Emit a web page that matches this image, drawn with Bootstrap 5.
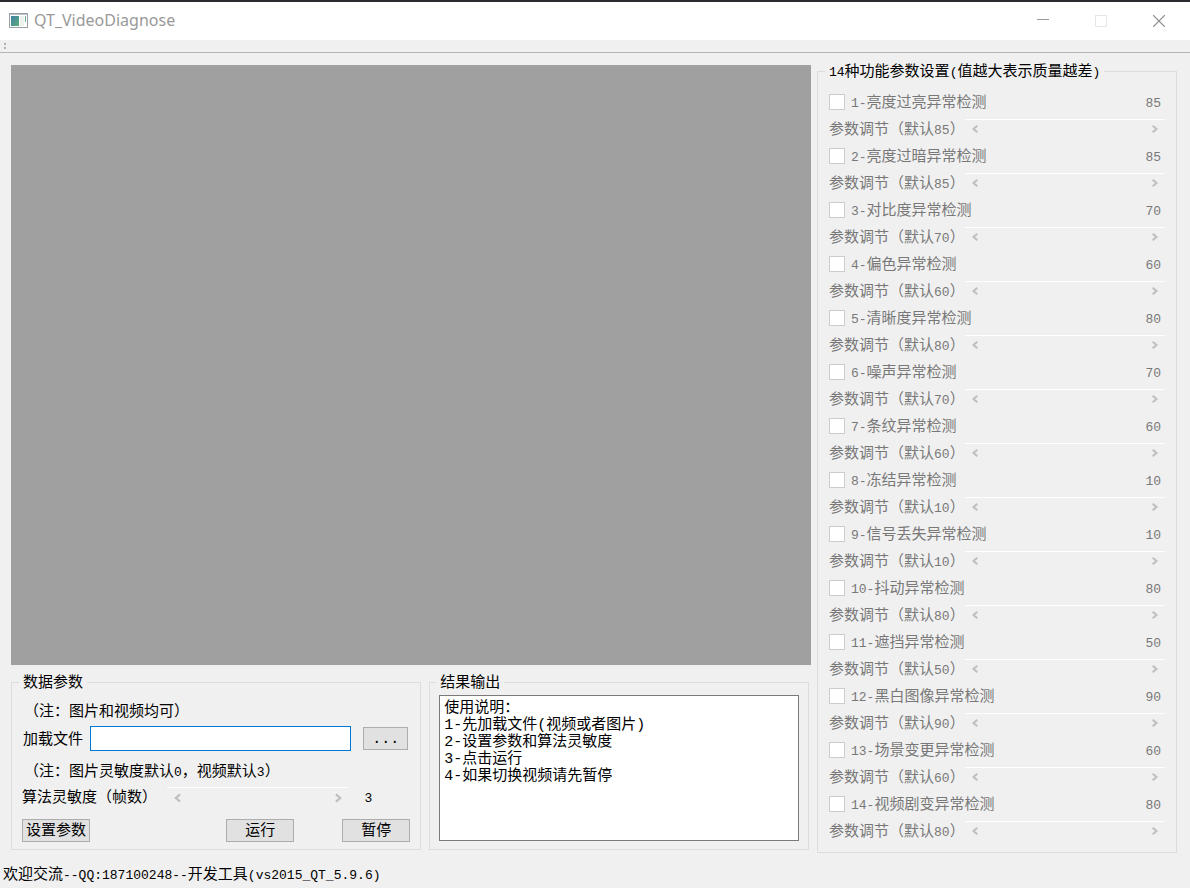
<!DOCTYPE html>
<html lang="zh-CN">
<head>
<meta charset="utf-8">
<meta name="viewport" content="width=device-width, initial-scale=1">
<title>QT_VideoDiagnose</title>
<link href="https://cdn.jsdelivr.net/npm/bootstrap@5.3.0/dist/css/bootstrap.min.css" rel="stylesheet">
<style>
  body { background: #f0f0f0; color: #000; font: 15px/20px "Liberation Mono", "Noto Sans CJK SC", monospace; }
  .lat { font-size: 13px; }
  .titlebar { background: #fff; border-top: 2px solid #2c2c30; height: 40px; padding: 0 2px 0 9px; }
  .app-title { font: 16px/20px "Noto Sans", sans-serif; color: #999; margin: 0 0 2px 6px; }
  .win-btn { width: 58px; height: 36px; border: 0; background: none; padding: 0; display: flex; align-items: center; justify-content: center; }
  .toolstrip { height: 13px; border-bottom: 1px solid #b4b4b4; padding-left: 3px; }
  .workspace { padding: 12px 13px 0 11px; gap: 6px; }
  .video-view { aspect-ratio: 4 / 3; background: #a0a0a0; }
  .side { flex: 0 0 360px; margin-top: -2px; }
  .group-box { border: 1px solid #dcdcdc; min-width: 0; }
  .group-box > legend { float: none; width: auto; height: 16px; font-size: 15px; line-height: 20px; margin: 0 0 0 -4px; padding: 0 4px; white-space: nowrap; }
  .lower { margin-top: 9px; gap: 8px; padding-right: 2px; }
  .g-data { flex: 41 1 0; padding: 0 10px 7px; }
  .g-result { flex: 38 1 0; padding: 0 9px 8px; }
  .g-data > legend, .g-result > legend { margin-left: -3px; }
  /* Song-style baseline: glyphs sit low in a 20px line */
  .row-text { height: 20px; line-height: 24px; white-space: nowrap; }
  .note-a { margin-top: 11px; padding-left: 2px; }
  .note-b { margin-top: 10px; padding-left: 2px; }
  .file-row { margin-top: 5px; padding: 0 2px 0 1px; }
  .file-row label { margin-right: 7px; }
  .sens-row { margin-top: 6px; }
  .sens-row .scroller { margin: 0 16px 0 10px; }
  .sens-row output { margin-right: 38px; }
  .path-input { height: 25px; border: 1px solid #0078d7; border-radius: 0; padding: 0 4px; font-size: 15px; background: #fff; }
  .path-input:focus { border-color: #0078d7; box-shadow: none; }
  .push { height: 23px; width: 68px; border: 1px solid #adadad; border-radius: 0; background: #e1e1e1; color: #000; font-size: 15px; line-height: 18px; padding: 2px 0 0; }
  .push:hover { border-color: #0078d7; background: #e5f1fb; color: #000; }
  .browse { width: 45px; margin-left: 12px; }
  .out-text { height: 146px; margin-top: 5px; border: 1px solid #7a7a7a; border-radius: 0; background: #fff; color: #000; font-size: 15px; line-height: 17px; padding: 4px 4px; resize: none; }
  .scroller { height: 20px; border-top: 1px solid #fff; }
  .scroller button { border: 0; background: none; padding: 0; width: 20px; height: 19px; display: flex; align-items: center; justify-content: center; flex: none; }
  .scroller input { appearance: none; -webkit-appearance: none; background: none; flex: 1 1 0; min-width: 0; height: 18px; margin: 0; }
  .scroller input::-webkit-slider-thumb { -webkit-appearance: none; width: 1px; height: 1px; background: none; border: 0; }
  .side .group-box { padding: 9px 11px 8px; color: #787878; }
  .side legend { color: #000; }
  .item-row { height: 27px; }
  .item-row label, .item-row output { height: 20px; line-height: 24px; white-space: nowrap; }
  .item-row .form-check-input { width: 16px; height: 16px; margin: 0 6px 0 0; border: 1px solid #ccc; border-radius: 0; background: #fff; opacity: 1; flex: none; }
  .item-row .form-check-input:disabled ~ label { opacity: 1; }
  .item-row output { padding-right: 4px; }
  .item-row .scroller { flex: 0 0 200px; }
  .status { padding: 13px 3px 2px; }
</style>
</head>
<body>
<svg width="0" height="0" class="d-none" aria-hidden="true">
  <symbol id="lt" viewBox="0 0 8 8"><path d="M6.300 .7 2.500 4l3.800 3.300" fill="none" stroke="#bfbfbf" stroke-width="2"/></symbol>
  <symbol id="gt" viewBox="0 0 8 8"><path d="M1.700 .7 5.500 4 1.700 7.300" fill="none" stroke="#bfbfbf" stroke-width="2"/></symbol>
</svg>

<header class="titlebar d-flex align-items-center">
  <svg width="19" height="16" viewBox="0 0 19 16" aria-hidden="true">
    <defs><linearGradient id="scr" x1="0" y1="0" x2="1" y2="1"><stop offset="0" stop-color="#3e7ea6"/><stop offset="1" stop-color="#5eae7c"/></linearGradient></defs>
    <rect x=".5" y=".5" width="18" height="14" fill="#fff" stroke="#9aa0a8"/>
    <path d="M1 1.500h17" stroke="#b9c2cc"/>
    <rect x="2" y="3" width="8" height="10" fill="url(#scr)"/>
    <rect x="11" y="3" width="4" height="10" fill="#eef2ee"/>
    <path d="M16.500 3v6" stroke="#6fb08f"/>
  </svg>
  <h1 class="app-title">QT_VideoDiagnose</h1>
  <div class="d-flex ms-auto">
    <button class="win-btn" type="button" aria-label="最小化"><svg width="12" height="12" viewBox="0 0 12 12"><path d="M0 4.500h12" stroke="#999"/></svg></button>
    <button class="win-btn" type="button" aria-label="最大化" disabled><svg width="12" height="12" viewBox="0 0 12 12"><rect x=".5" y=".5" width="11" height="11" fill="none" stroke="#e6e6e6"/></svg></button>
    <button class="win-btn" type="button" aria-label="关闭"><svg width="12" height="12" viewBox="0 0 12 12"><path d="M0 0l12 12M12 0 0 12" stroke="#888" stroke-width="1.200"/></svg></button>
  </div>
</header>
<div class="toolstrip"><svg class="d-block" width="4" height="12" viewBox="0 0 4 12" aria-hidden="true"><path d="M1 3h2v2H1zM1 7h2v2H1z" fill="#b0b0b0"/></svg></div>

<main class="workspace d-flex align-items-start">
  <div class="flex-fill">
    <div class="video-view"></div>
    <div class="lower d-flex">
      <fieldset class="group-box g-data">
        <legend>数据参数</legend>
        <div class="row-text note-a">（注：图片和视频均可）</div>
        <div class="file-row d-flex align-items-center">
          <label for="path" class="row-text">加载文件</label>
          <input id="path" type="text" class="form-control path-input flex-fill">
          <button type="button" class="btn push browse flex-shrink-0">...</button>
        </div>
        <div class="row-text note-b">（注：图片灵敏度默认<span class="lat">0</span>，视频默认<span class="lat">3</span>）</div>
        <div class="sens-row d-flex align-items-center">
          <label for="sens" class="row-text">算法灵敏度（帧数）</label>
          <div class="scroller d-flex flex-fill">
            <button type="button" aria-label="减小" disabled><svg width="9" height="10"><use href="#lt"/></svg></button>
            <input id="sens" type="range" min="0" max="10" value="3" disabled>
            <button type="button" aria-label="增大" disabled><svg width="9" height="10"><use href="#gt"/></svg></button>
          </div>
          <output for="sens" class="lat row-text">3</output>
        </div>
        <div class="d-flex mt-2 pt-1">
          <button type="button" class="btn push">设置参数</button>
          <button type="button" class="btn push ms-auto me-5">运行</button>
          <button type="button" class="btn push">暂停</button>
        </div>
      </fieldset>
      <fieldset class="group-box g-result">
        <legend>结果输出</legend>
        <textarea class="form-control out-text" aria-label="结果输出" readonly>使用说明：
1-先加载文件(视频或者图片)
2-设置参数和算法灵敏度
3-点击运行
4-如果切换视频请先暂停</textarea>
      </fieldset>
    </div>
  </div>

  <aside class="side">
    <fieldset class="group-box">
      <legend><span class="lat">14</span>种功能参数设置<span class="lat">(</span>值越大表示质量越差<span class="lat">)</span></legend>

      <div class="item-row d-flex align-items-center"><input class="form-check-input" type="checkbox" id="c1" disabled><label for="c1"><span class="lat">1-</span>亮度过亮异常检测</label><output class="lat ms-auto" for="r1">85</output></div>
      <div class="item-row d-flex align-items-center justify-content-between"><label for="r1">参数调节（默认<span class="lat">85</span>）</label><div class="scroller d-flex"><button type="button" aria-label="减小" disabled><svg width="8" height="8"><use href="#lt"/></svg></button><input type="range" id="r1" value="85" disabled><button type="button" aria-label="增大" disabled><svg width="8" height="8"><use href="#gt"/></svg></button></div></div>

      <div class="item-row d-flex align-items-center"><input class="form-check-input" type="checkbox" id="c2" disabled><label for="c2"><span class="lat">2-</span>亮度过暗异常检测</label><output class="lat ms-auto" for="r2">85</output></div>
      <div class="item-row d-flex align-items-center justify-content-between"><label for="r2">参数调节（默认<span class="lat">85</span>）</label><div class="scroller d-flex"><button type="button" aria-label="减小" disabled><svg width="8" height="8"><use href="#lt"/></svg></button><input type="range" id="r2" value="85" disabled><button type="button" aria-label="增大" disabled><svg width="8" height="8"><use href="#gt"/></svg></button></div></div>

      <div class="item-row d-flex align-items-center"><input class="form-check-input" type="checkbox" id="c3" disabled><label for="c3"><span class="lat">3-</span>对比度异常检测</label><output class="lat ms-auto" for="r3">70</output></div>
      <div class="item-row d-flex align-items-center justify-content-between"><label for="r3">参数调节（默认<span class="lat">70</span>）</label><div class="scroller d-flex"><button type="button" aria-label="减小" disabled><svg width="8" height="8"><use href="#lt"/></svg></button><input type="range" id="r3" value="70" disabled><button type="button" aria-label="增大" disabled><svg width="8" height="8"><use href="#gt"/></svg></button></div></div>

      <div class="item-row d-flex align-items-center"><input class="form-check-input" type="checkbox" id="c4" disabled><label for="c4"><span class="lat">4-</span>偏色异常检测</label><output class="lat ms-auto" for="r4">60</output></div>
      <div class="item-row d-flex align-items-center justify-content-between"><label for="r4">参数调节（默认<span class="lat">60</span>）</label><div class="scroller d-flex"><button type="button" aria-label="减小" disabled><svg width="8" height="8"><use href="#lt"/></svg></button><input type="range" id="r4" value="60" disabled><button type="button" aria-label="增大" disabled><svg width="8" height="8"><use href="#gt"/></svg></button></div></div>

      <div class="item-row d-flex align-items-center"><input class="form-check-input" type="checkbox" id="c5" disabled><label for="c5"><span class="lat">5-</span>清晰度异常检测</label><output class="lat ms-auto" for="r5">80</output></div>
      <div class="item-row d-flex align-items-center justify-content-between"><label for="r5">参数调节（默认<span class="lat">80</span>）</label><div class="scroller d-flex"><button type="button" aria-label="减小" disabled><svg width="8" height="8"><use href="#lt"/></svg></button><input type="range" id="r5" value="80" disabled><button type="button" aria-label="增大" disabled><svg width="8" height="8"><use href="#gt"/></svg></button></div></div>

      <div class="item-row d-flex align-items-center"><input class="form-check-input" type="checkbox" id="c6" disabled><label for="c6"><span class="lat">6-</span>噪声异常检测</label><output class="lat ms-auto" for="r6">70</output></div>
      <div class="item-row d-flex align-items-center justify-content-between"><label for="r6">参数调节（默认<span class="lat">70</span>）</label><div class="scroller d-flex"><button type="button" aria-label="减小" disabled><svg width="8" height="8"><use href="#lt"/></svg></button><input type="range" id="r6" value="70" disabled><button type="button" aria-label="增大" disabled><svg width="8" height="8"><use href="#gt"/></svg></button></div></div>

      <div class="item-row d-flex align-items-center"><input class="form-check-input" type="checkbox" id="c7" disabled><label for="c7"><span class="lat">7-</span>条纹异常检测</label><output class="lat ms-auto" for="r7">60</output></div>
      <div class="item-row d-flex align-items-center justify-content-between"><label for="r7">参数调节（默认<span class="lat">60</span>）</label><div class="scroller d-flex"><button type="button" aria-label="减小" disabled><svg width="8" height="8"><use href="#lt"/></svg></button><input type="range" id="r7" value="60" disabled><button type="button" aria-label="增大" disabled><svg width="8" height="8"><use href="#gt"/></svg></button></div></div>

      <div class="item-row d-flex align-items-center"><input class="form-check-input" type="checkbox" id="c8" disabled><label for="c8"><span class="lat">8-</span>冻结异常检测</label><output class="lat ms-auto" for="r8">10</output></div>
      <div class="item-row d-flex align-items-center justify-content-between"><label for="r8">参数调节（默认<span class="lat">10</span>）</label><div class="scroller d-flex"><button type="button" aria-label="减小" disabled><svg width="8" height="8"><use href="#lt"/></svg></button><input type="range" id="r8" value="10" disabled><button type="button" aria-label="增大" disabled><svg width="8" height="8"><use href="#gt"/></svg></button></div></div>

      <div class="item-row d-flex align-items-center"><input class="form-check-input" type="checkbox" id="c9" disabled><label for="c9"><span class="lat">9-</span>信号丢失异常检测</label><output class="lat ms-auto" for="r9">10</output></div>
      <div class="item-row d-flex align-items-center justify-content-between"><label for="r9">参数调节（默认<span class="lat">10</span>）</label><div class="scroller d-flex"><button type="button" aria-label="减小" disabled><svg width="8" height="8"><use href="#lt"/></svg></button><input type="range" id="r9" value="10" disabled><button type="button" aria-label="增大" disabled><svg width="8" height="8"><use href="#gt"/></svg></button></div></div>

      <div class="item-row d-flex align-items-center"><input class="form-check-input" type="checkbox" id="c10" disabled><label for="c10"><span class="lat">10-</span>抖动异常检测</label><output class="lat ms-auto" for="r10">80</output></div>
      <div class="item-row d-flex align-items-center justify-content-between"><label for="r10">参数调节（默认<span class="lat">80</span>）</label><div class="scroller d-flex"><button type="button" aria-label="减小" disabled><svg width="8" height="8"><use href="#lt"/></svg></button><input type="range" id="r10" value="80" disabled><button type="button" aria-label="增大" disabled><svg width="8" height="8"><use href="#gt"/></svg></button></div></div>

      <div class="item-row d-flex align-items-center"><input class="form-check-input" type="checkbox" id="c11" disabled><label for="c11"><span class="lat">11-</span>遮挡异常检测</label><output class="lat ms-auto" for="r11">50</output></div>
      <div class="item-row d-flex align-items-center justify-content-between"><label for="r11">参数调节（默认<span class="lat">50</span>）</label><div class="scroller d-flex"><button type="button" aria-label="减小" disabled><svg width="8" height="8"><use href="#lt"/></svg></button><input type="range" id="r11" value="50" disabled><button type="button" aria-label="增大" disabled><svg width="8" height="8"><use href="#gt"/></svg></button></div></div>

      <div class="item-row d-flex align-items-center"><input class="form-check-input" type="checkbox" id="c12" disabled><label for="c12"><span class="lat">12-</span>黑白图像异常检测</label><output class="lat ms-auto" for="r12">90</output></div>
      <div class="item-row d-flex align-items-center justify-content-between"><label for="r12">参数调节（默认<span class="lat">90</span>）</label><div class="scroller d-flex"><button type="button" aria-label="减小" disabled><svg width="8" height="8"><use href="#lt"/></svg></button><input type="range" id="r12" value="90" disabled><button type="button" aria-label="增大" disabled><svg width="8" height="8"><use href="#gt"/></svg></button></div></div>

      <div class="item-row d-flex align-items-center"><input class="form-check-input" type="checkbox" id="c13" disabled><label for="c13"><span class="lat">13-</span>场景变更异常检测</label><output class="lat ms-auto" for="r13">60</output></div>
      <div class="item-row d-flex align-items-center justify-content-between"><label for="r13">参数调节（默认<span class="lat">60</span>）</label><div class="scroller d-flex"><button type="button" aria-label="减小" disabled><svg width="8" height="8"><use href="#lt"/></svg></button><input type="range" id="r13" value="60" disabled><button type="button" aria-label="增大" disabled><svg width="8" height="8"><use href="#gt"/></svg></button></div></div>

      <div class="item-row d-flex align-items-center"><input class="form-check-input" type="checkbox" id="c14" disabled><label for="c14"><span class="lat">14-</span>视频剧变异常检测</label><output class="lat ms-auto" for="r14">80</output></div>
      <div class="item-row d-flex align-items-center justify-content-between"><label for="r14">参数调节（默认<span class="lat">80</span>）</label><div class="scroller d-flex"><button type="button" aria-label="减小" disabled><svg width="8" height="8"><use href="#lt"/></svg></button><input type="range" id="r14" value="80" disabled><button type="button" aria-label="增大" disabled><svg width="8" height="8"><use href="#gt"/></svg></button></div></div>
    </fieldset>
  </aside>
</main>

<footer class="status">欢迎交流<span class="lat">--QQ:187100248--</span>开发工具<span class="lat">(vs2015_QT_5.9.6)</span></footer>
<script src="https://cdn.jsdelivr.net/npm/bootstrap@5.3.0/dist/js/bootstrap.bundle.min.js"></script>
</body>
</html>
